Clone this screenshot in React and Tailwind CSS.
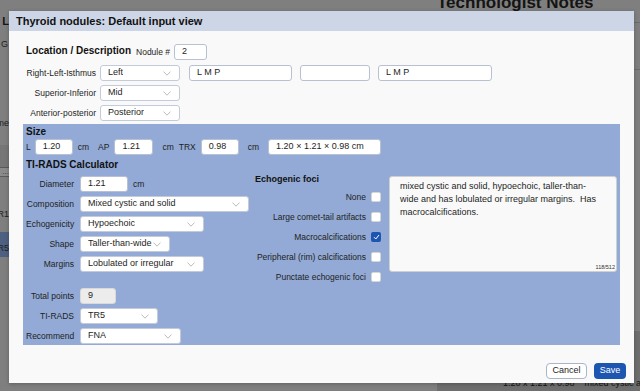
import React from "react";

function Chevron() {
  return (
    <svg width="8" height="5" viewBox="0 0 8 5" className="shrink-0">
      <path d="M0.5 0.6 L4 4.2 L7.5 0.6" fill="none" stroke="#b3b3b3" strokeWidth="0.9" />
    </svg>
  );
}

function Select({ value, w }) {
  return (
    <div className={`flex h-[16px] items-center justify-between rounded-[3px] border border-[#c4cbd8] bg-white pl-[7px] pr-[8px] text-[9px] text-[#1e1e1e] ${w}`}>
      <span className="truncate">{value}</span>
      <Chevron />
    </div>
  );
}

function Field({ value, w, gray }) {
  return (
    <div
      className={`flex h-[16px] items-center rounded-[3px] border pl-[7px] text-[9px] text-[#1e1e1e] ${w} ${
        gray ? "bg-[#ececec] border-[#d9d9d9]" : "bg-white border-[#b7c1d2]"
      }`}
    >
      {value}
    </div>
  );
}

function Row({ label, children, labelW = "w-[48px]", gap = "gap-[6px]" }) {
  return (
    <div className={`flex h-[16px] items-center ${gap}`}>
      <span className={`text-right text-[8.5px] text-[#1e1e1e] whitespace-nowrap ${labelW}`}>{label}</span>
      {children}
    </div>
  );
}

function Check({ label, checked }) {
  return (
    <div className="flex h-[20px] items-center justify-end gap-[5px]">
      <span className="text-[8.5px] text-[#1e1e1e] whitespace-nowrap">{label}</span>
      {checked ? (
        <div className="flex h-[10px] w-[10px] items-center justify-center rounded-[2px] bg-[#1d56b1]">
          <svg width="7" height="6" viewBox="0 0 7 6">
            <path d="M1 3.2 L2.8 5 L6 1" fill="none" stroke="white" strokeWidth="1" />
          </svg>
        </div>
      ) : (
        <div className="h-[10px] w-[10px] rounded-[2px] border border-[#d6d6d6] bg-white" />
      )}
    </div>
  );
}

export default function App() {
  const note =
    "mixed cystic and solid, hypoechoic, taller-than-wide and has lobulated or irregular margins.  Has macrocalcifications.";

  return (
    <div className="relative h-[391px] w-[640px] overflow-hidden bg-[#7f7f7f] font-['Liberation_Sans',Arial,sans-serif]">
      {/* dimmed page behind the dialog */}
      <div className="flex h-full">
        <div className="flex w-[9px] shrink-0 flex-col">
          <div className="mt-[13px] flex justify-end whitespace-nowrap text-[11px] font-bold text-[#151515]">Size: L</div>
          <div className="mt-[8px] flex justify-end whitespace-nowrap pr-[1px] text-[9px] text-[#202020]">G</div>
          <div className="mt-[66px] flex justify-end whitespace-nowrap text-[9px] text-[#202020]">Volume</div>
          <div className="mt-[14px] h-[22px] bg-[#767676]" />
          <div className="flex h-[10px] items-center justify-end border-y border-[#5a5a5a] bg-[#8a8a8a] text-[8px] text-[#333]">...</div>
          <div className="mt-[31px] flex justify-end whitespace-nowrap text-[9px] text-[#202020]">TR1</div>
          <div className="mt-[11px] flex h-[25px] items-end justify-end bg-[#4e6081] pb-[2px] text-[9px] text-[#202020]">TR5</div>
        </div>
        <div className="w-[428px] shrink-0" />
        <div className="flex flex-1 flex-col">
          <div className="-mt-[7px] whitespace-nowrap text-[17px] font-bold leading-[20px] text-[#141414]">Technologist Notes</div>
          <div className="mt-[9px] border-t border-[#6c6c6c]" />
          <div className="mt-[46px] border-t border-[#6c6c6c]" />
          <div className="mt-auto flex h-[60px] flex-col bg-[#6e6e6e] pl-[8px] pt-[2px]">
            <div className="flex items-start gap-[10px] text-[9px] leading-[12px] text-[#141414]">
              <span className="w-[48px]" />
              <span className="mt-[44px] whitespace-nowrap">1.20 x 1.21 x 0.98</span>
              <span className="mt-[44px] whitespace-nowrap">mixed cystic a</span>
            </div>
          </div>
        </div>
      </div>

      {/* dialog */}
      <div className="absolute left-[9px] top-[11px] flex h-[372px] w-[625px] flex-col bg-[#f9f9f9] shadow-[0_1px_4px_rgba(0,0,0,0.25)]">
        <div className="flex h-[20px] items-center bg-[#cdd6e6] pl-[7px] text-[11px] font-bold text-[#111]">
          Thyroid nodules: Default input view
        </div>

        <div className="flex flex-1 flex-col px-[14px] pt-[13px]">
          {/* Location */}
          <div className="flex flex-col gap-[4px] pl-[3px]">
            <div className="flex h-[16px] items-center">
              <span className="mb-[4px] text-[10px] font-bold text-[#111]">Location / Description</span>
              <span className="ml-[5px] mt-[1px] text-[8.5px] text-[#1e1e1e]">Nodule #</span>
              <Field value="2" w="ml-[4px] w-[33px]" />
            </div>
            <div className="mt-[1px] flex items-center">
              <Row label="Right-Left-Isthmus" labelW="w-[70px]" gap="gap-[4px]">
                <Select value="Left" w="w-[80px]" />
              </Row>
              <Field value="L M P" w="ml-[9px] w-[103px]" />
              <Field value="" w="ml-[8px] w-[70px]" />
              <Field value="L M P" w="ml-[8px] w-[114px]" />
            </div>
            <Row label="Superior-Inferior" labelW="w-[70px]" gap="gap-[4px]">
              <Select value="Mid" w="w-[80px]" />
            </Row>
            <Row label="Anterior-posterior" labelW="w-[70px]" gap="gap-[4px]">
              <Select value="Posterior" w="w-[80px]" />
            </Row>
          </div>

          {/* Size + TI-RADS */}
          <div className="mt-[3px] flex flex-col bg-[#92aad5] pb-[1px] pl-[3px] pr-[3px] pt-[1px]">
            <div className="text-[10px] font-bold leading-[14px] text-[#111]">Size</div>
            <div className="flex h-[16px] items-center text-[8.5px] text-[#1e1e1e]">
              <span>L</span>
              <Field value="1.20" w="ml-[4px] w-[38px]" />
              <span className="ml-[5px]">cm</span>
              <span className="ml-[9px]">AP</span>
              <Field value="1.21" w="ml-[5px] w-[39px]" />
              <span className="ml-[9px]">cm</span>
              <span className="ml-[5px]">TRX</span>
              <Field value="0.98" w="ml-[5px] w-[38px]" />
              <span className="ml-[9px]">cm</span>
              <Field value="1.20 × 1.21 × 0.98 cm" w="ml-[9px] w-[113px]" />
            </div>

            <div className="mt-[3px] text-[10px] font-bold leading-[14px] text-[#111]">TI-RADS Calculator</div>

            <div className="mt-[4px] flex items-start">
              <div className="flex w-[229px] shrink-0 flex-col gap-[4px]">
                <Row label="Diameter">
                  <Field value="1.21" w="w-[48px]" />
                  <span className="-ml-[1px] text-[8.5px] text-[#1e1e1e]">cm</span>
                </Row>
                <Row label="Composition">
                  <Select value="Mixed cystic and solid" w="w-[169px]" />
                </Row>
                <Row label="Echogenicity">
                  <Select value="Hypoechoic" w="w-[124px]" />
                </Row>
                <Row label="Shape">
                  <Select value="Taller-than-wide" w="w-[90px]" />
                </Row>
                <Row label="Margins">
                  <Select value="Lobulated or irregular" w="w-[124px]" />
                </Row>
                <div className="mt-[12px]">
                  <Row label="Total points">
                    <Field value="9" gray w="w-[36px]" />
                  </Row>
                </div>
                <Row label="TI-RADS">
                  <Select value="TR5" w="w-[78px]" />
                </Row>
                <Row label="Recommend">
                  <Select value="FNA" w="w-[101px]" />
                </Row>
              </div>

              <div className="-mt-[3px] flex w-[126px] shrink-0 flex-col">
                <div className="text-[9px] font-bold leading-[12px] text-[#111]">Echogenic foci</div>
                <div className="mt-[2px] flex flex-col">
                  <Check label="None" />
                  <Check label="Large comet-tail artifacts" />
                  <Check label="Macrocalcifications" checked />
                  <Check label="Peripheral (rim) calcifications" />
                  <Check label="Punctate echogenic foci" />
                </div>
              </div>

              <div className="relative ml-[8px] h-[96px] w-[228px] rounded-[3px] border border-[#d0d0d0] bg-[#f9f9f9] pl-[10px] pr-[13px] pt-[3px] text-[9px] leading-[13px] text-[#1e1e1e] whitespace-pre-wrap">
                {note}
                <span className="absolute bottom-[1px] right-[1px] text-[5.5px] leading-[6px] text-[#333]">118/512</span>
              </div>
            </div>
          </div>

          {/* footer */}
          <div className="-mr-[6px] mt-[18px] flex justify-end gap-[7px]">
            <button className="h-[16px] w-[41px] rounded-[4px] border border-[#a9b5c9] bg-white text-[9px] text-[#1e1e1e]">
              Cancel
            </button>
            <button className="h-[16px] w-[32px] rounded-[4px] bg-[#1d56b1] text-[9px] text-white">
              Save
            </button>
          </div>
        </div>
      </div>
    </div>
  );
}
